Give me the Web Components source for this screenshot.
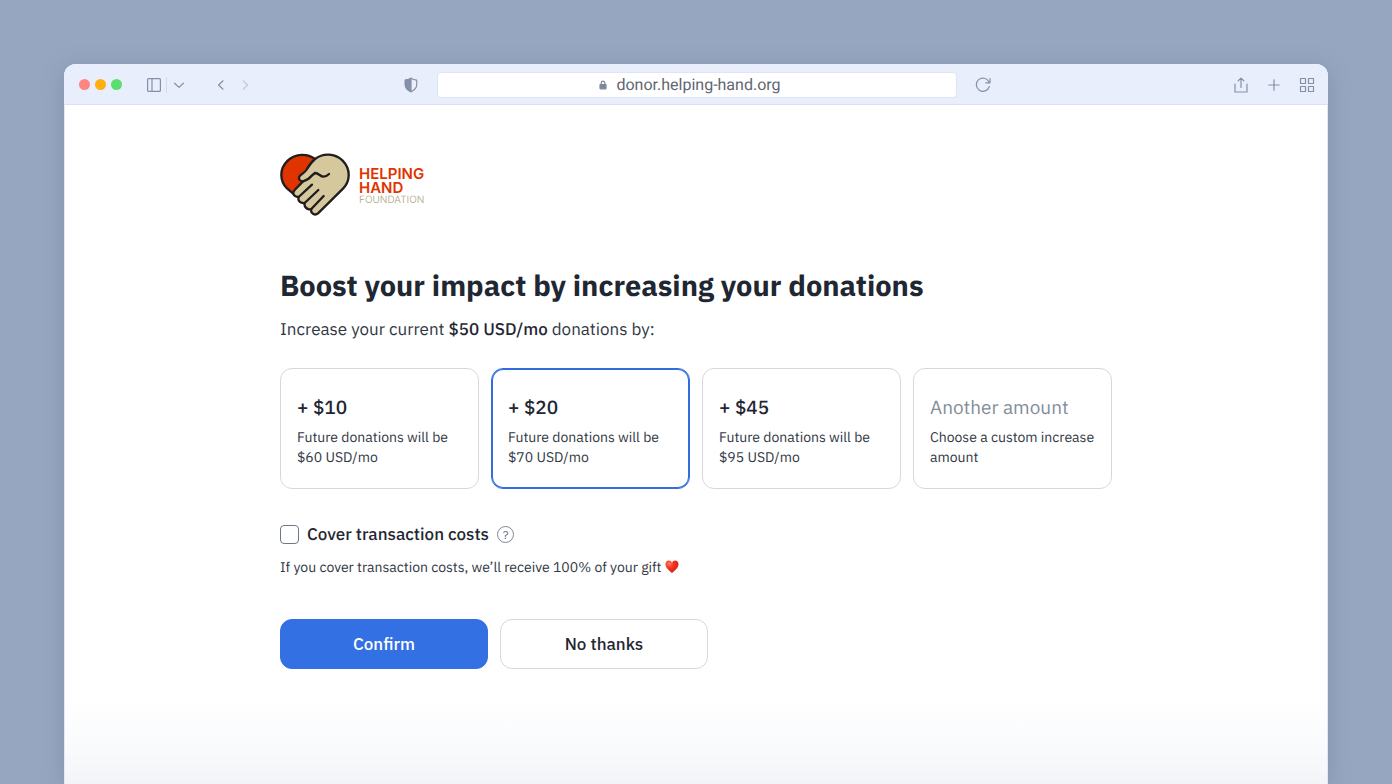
<!DOCTYPE html>
<html lang="en">
<head>
<meta charset="utf-8">
<meta name="viewport" content="width=device-width, initial-scale=1">
<title>Helping Hand Foundation</title>
<style>
  body {
    margin: 0;
    min-height: 100vh;
    background: #97a6c0;
    color: #1f2733;
    font-family: "IBM Plex Sans", Roboto, "Liberation Sans", sans-serif;
    text-rendering: geometricPrecision;
  }
  b { font-weight: 500; color: #1f2733; }
</style>
</head>
<body>
<browser-window>
  <browser-toolbar slot="toolbar" url="donor.helping-hand.org"></browser-toolbar>
  <brand-logo></brand-logo>
  <donation-form>
    <span slot="title">Boost your impact by increasing your donations</span>
    <span slot="intro">Increase your current <b>$50 USD/mo</b> donations by:</span>
    <amount-option slot="amounts" heading="+ $10">Future donations will be $60 USD/mo</amount-option>
    <amount-option slot="amounts" heading="+ $20" checked>Future donations will be $70 USD/mo</amount-option>
    <amount-option slot="amounts" heading="+ $45">Future donations will be $95 USD/mo</amount-option>
    <amount-option slot="amounts" heading="Another amount" muted>Choose a custom increase amount</amount-option>
    <cover-costs slot="extras" label="Cover transaction costs">If you cover transaction costs, we’ll receive 100% of your gift</cover-costs>
    <action-button slot="actions" primary>Confirm</action-button>
    <action-button slot="actions">No thanks</action-button>
  </donation-form>
</browser-window>

<script>
class BrowserWindow extends HTMLElement {
    constructor() {
        super();
        this.attachShadow({mode: "open"});
    }
    connectedCallback() {
        this.shadowRoot.innerHTML = `
          <style>
            :host {
              display: flex;
              box-sizing: border-box;
              min-height: 100vh;
              padding: 64px 64px 0;
            }
            .window {
              flex: 1;
              min-width: 0;
              border-radius: 12px 12px 0 0;
              overflow: hidden;
              background: linear-gradient(to top, #f3f4f7, #f9fafc 32px, #ffffff 88px);
              box-shadow: inset 1px 0 #e2e8f6, inset -1px 0 #e2e8f6, 0 4px 24px rgba(60, 80, 120, 0.24);
            }
            main {
              max-width: 832px;
              margin: 0 auto;
              padding: 48px 24px;
            }
          </style>
          <div class="window">
            <slot name="toolbar"></slot>
            <main><slot></slot></main>
          </div>
        `;
    }
}

class BrowserToolbar extends HTMLElement {
    constructor() {
        super();
        this.attachShadow({mode: "open"});
    }
    connectedCallback() {
        this.shadowRoot.innerHTML = `
          <style>
            :host {
              display: grid;
              box-sizing: border-box;
              grid-template-columns: 1fr minmax(0, 520px) 1fr;
              align-items: center;
              column-gap: 18px;
              height: 41px;
              padding: 1px 13px 0 14px;
              background: #e8eefc;
              border-bottom: 1px solid #d9e1f5;
            }
            .side {
              display: flex;
              align-items: center;
            }
            .dots {
              display: flex;
              gap: 5px;
              margin: 0 24px 0 1px;
            }
            .dots i {
              width: 11px;
              height: 11px;
              border-radius: 50%;
              background: #ff8482;
            }
            .dots i:nth-child(2) { background: #ffb00f; }
            .dots i:nth-child(3) { background: #5bdd70; }
            button {
              display: flex;
              padding: 0;
              border: 0;
              background: none;
              color: #8590a8;
            }
            svg {
              display: block;
              fill: none;
              stroke: currentColor;
              stroke-width: 1.2;
              stroke-linecap: round;
              stroke-linejoin: round;
            }
            .divider {
              width: 1px;
              height: 16px;
              margin: 0 4px;
              background: #d5dcec;
            }
            .history {
              display: flex;
              gap: 8px;
              margin-left: 26px;
            }
            .faded { color: #c3cbdc; }
            .push { margin-left: auto; }
            .tools {
              display: flex;
              gap: 17px;
            }
            .address {
              display: flex;
              align-items: center;
              justify-content: center;
              gap: 8px;
              height: 24px;
              padding-right: 14px;
              background: #ffffff;
              border: 1px solid #dde4f4;
              border-radius: 4px;
              color: #5f6572;
              font: 16px/24px Roboto, "Liberation Sans", sans-serif;
            }
            .address svg { color: #7d869c; }
          </style>
          <div class="side">
            <div class="dots"><i></i><i></i><i></i></div>
            <button aria-label="Sidebar">
              <svg width="16" height="16" viewBox="0 0 16 16"><rect x="1.6" y="1.6" width="12.8" height="12.8" rx="1"/><path d="M6 2v12"/></svg>
            </button>
            <span class="divider"></span>
            <button aria-label="Tab groups">
              <svg width="16" height="16" viewBox="0 0 16 16"><path d="M3.6 6.2 8 10.4l4.4-4.2"/></svg>
            </button>
            <div class="history">
              <button aria-label="Back"><svg width="16" height="16" viewBox="0 0 16 16"><path d="M10 3.8 5.6 8l4.4 4.2"/></svg></button>
              <button class="faded" aria-label="Forward"><svg width="16" height="16" viewBox="0 0 16 16"><path d="M6.2 3.8 10.6 8l-4.4 4.2"/></svg></button>
            </div>
            <button class="push" aria-label="Privacy report">
              <svg width="16" height="16" viewBox="0 0 16 16"><path d="M8 1.2c1.7 1.2 3.5 1.7 5.7 1.9v4.7c0 3.2-2.5 5.5-5.7 7-3.2-1.5-5.7-3.8-5.7-7V3.1C4.5 2.9 6.3 2.4 8 1.2Z"/><path d="M8 1.2v13.6c-3.2-1.5-5.7-3.8-5.7-7V3.1C4.5 2.9 6.3 2.4 8 1.2Z" fill="currentColor"/></svg>
            </button>
          </div>
          <div class="address">
            <svg width="10" height="10" viewBox="0 0 10 10"><rect x="2" y="4.6" width="6" height="4.2" rx=".5" fill="currentColor"/><path d="M3.2 4.5V3a1.8 1.8 0 0 1 3.6 0v1.5"/></svg>
            <span>${this.getAttribute("url")}</span>
          </div>
          <div class="side">
            <button aria-label="Reload">
              <svg width="16" height="16" viewBox="0 0 16 16"><path d="M14 5A6.6 6.6 0 1 0 14.3 9.500M15 1.5v4.3h-4.3"/></svg>
            </button>
            <div class="tools push">
              <button aria-label="Share"><svg width="16" height="16" viewBox="0 0 16 16"><path d="M8 10.5V1.2M5.2 3.8 8 1.1l2.8 2.7M2 7v8h12V7"/></svg></button>
              <button aria-label="New tab"><svg width="16" height="16" viewBox="0 0 16 16"><path d="M8 2.8v10.4M2.8 8h10.4"/></svg></button>
              <button aria-label="Tab overview"><svg width="16" height="16" viewBox="0 0 16 16"><path d="M1.5 1.5h5v5h-5zM9.5 1.5h5v5h-5zM1.5 9.5h5v5h-5zM9.5 9.5h5v5h-5z"/></svg></button>
            </div>
          </div>
        `;
    }
}

class BrandLogo extends HTMLElement {
    constructor() {
        super();
        this.attachShadow({mode: "open"});
    }
    connectedCallback() {
        this.shadowRoot.innerHTML = `
          <style>
            :host {
              display: flex;
              align-items: center;
              gap: 8px;
              font-family: Inter, Lato, sans-serif;
            }
            svg { display: block; }
            .name {
              width: 80px;
              padding-top: 2px;
              color: #e03400;
              font-size: 15px;
              font-weight: 600;
              line-height: 14px;
            }
            .name small {
              display: block;
              color: #aba07c;
              font-size: 10px;
              font-weight: 300;
              line-height: 10px;
            }
          </style>
          <svg width="71" height="64" viewBox="13 9 213 192" fill="none" stroke="#211d1c" stroke-width="7" stroke-linecap="round" stroke-linejoin="round">
            <path fill="#e03400" d="M118 27C96 10 60 9 36 32C10 57 12 93 34 115L56 134L120 60Z"/>
            <path fill="#d5c89d" d="M118 27C142 8 178 9 201 32C225 57 225 92 202 116L127 190C118 198 103 190 107 177C96 181 84 171 87 159C75 161 65 152 69 141C55 141 48 130 57 120L82 94C72 94 66 85 73 77C82 69 87 68 92 60C99 48 106 37 118 27Z"/>
            <path d="M82 94C94 91 101 86 107 78L118 69C128 68 133 80 144 80C151 80 156 76 160 72M109 104L69 141M128 120L87 159M144 138L107 177"/>
          </svg>
          <div class="name">HELPING<br>HAND<small>FOUNDATION</small></div>
        `;
    }
}

class DonationForm extends HTMLElement {
    constructor() {
        super();
        this.attachShadow({mode: "open"});
    }
    connectedCallback() {
        this.shadowRoot.innerHTML = `
          <style>
            :host {
              display: block;
              margin-top: 48px;
            }
            h1 {
              margin: 0;
              font-size: 29px;
              font-weight: 700;
              line-height: 40px;
            }
            p {
              margin: 12px 0 27px;
              font-size: 17px;
              line-height: 24px;
            }
            ::slotted([slot="intro"]) { color: #303743; }
            .amounts {
              display: grid;
              grid-template-columns: repeat(4, 1fr);
              gap: 12px;
            }
            .actions {
              display: flex;
              gap: 12px;
              margin-top: 42px;
            }
            @media only screen and (max-width: 860px) {
              .amounts { grid-template-columns: repeat(2, 1fr); }
            }
          </style>
          <h1><slot name="title"></slot></h1>
          <p><slot name="intro"></slot></p>
          <div class="amounts" role="radiogroup" aria-label="Donation increase"><slot name="amounts"></slot></div>
          <slot name="extras"></slot>
          <div class="actions"><slot name="actions"></slot></div>
        `;
        // radios sit in separate shadow roots, so the group is kept in sync here
        this.addEventListener("amount-change", (e) => {
            this.querySelectorAll("amount-option").forEach((option) => {
                if (option !== e.target) option.uncheck();
            });
        });
    }
}

class AmountOption extends HTMLElement {
    constructor() {
        super();
        this.attachShadow({mode: "open"});
    }
    connectedCallback() {
        this.shadowRoot.innerHTML = `
          <style>
            :host { display: grid; }
            label {
              position: relative;
              display: block;
              box-sizing: border-box;
              min-height: 121px;
              padding: 26px 16px 20px;
              border: 1px solid #d5d8df;
              border-radius: 12px;
              background: #ffffff;
              cursor: pointer;
            }
            label:has(input:checked) {
              border-color: #2f6de1;
              box-shadow: inset 0 0 0 1px #2f6de1;
            }
            input {
              position: absolute;
              opacity: 0;
              margin: 0;
            }
            .heading {
              display: block;
              margin-bottom: 6px;
              font-size: 19px;
              font-weight: 500;
              line-height: 26px;
            }
            :host([muted]) .heading {
              color: #848d9a;
              font-weight: 400;
            }
            .text {
              display: block;
              color: #303743;
              font-size: 14px;
              line-height: 20px;
            }
          </style>
          <label>
            <input type="radio" name="amount" ${this.hasAttribute("checked") ? "checked" : ""}>
            <span class="heading">${this.getAttribute("heading")}</span>
            <span class="text"><slot></slot></span>
          </label>
        `;
        this.input = this.shadowRoot.querySelector("input");
        this.input.addEventListener("change", () => {
            this.dispatchEvent(new CustomEvent("amount-change", {bubbles: true}));
        });
    }
    uncheck() {
        this.input.checked = false;
    }
}

class CoverCosts extends HTMLElement {
    constructor() {
        super();
        this.attachShadow({mode: "open"});
    }
    connectedCallback() {
        this.shadowRoot.innerHTML = `
          <style>
            :host {
              display: block;
              margin-top: 32px;
            }
            .row {
              display: flex;
              align-items: center;
              gap: 8px;
            }
            label {
              display: flex;
              align-items: center;
              gap: 8px;
              font-size: 17px;
              font-weight: 500;
              line-height: 26px;
            }
            input {
              appearance: none;
              box-sizing: border-box;
              width: 19px;
              height: 19px;
              margin: 0;
              border: 1px solid #6c7889;
              border-radius: 4px;
              background: #ffffff;
            }
            input:checked { background: #2f6de1; }
            button {
              display: flex;
              box-sizing: border-box;
              align-items: center;
              justify-content: center;
              width: 17px;
              height: 17px;
              padding: 0;
              border: 1px solid #7a8797;
              border-radius: 50%;
              background: none;
              color: #6c7889;
              font: 12px/15px "IBM Plex Sans", Roboto, sans-serif;
            }
            .note {
              display: flex;
              align-items: center;
              gap: 3px;
              margin-top: 10px;
              color: #303743;
              font-size: 14px;
              line-height: 20px;
            }
          </style>
          <div class="row">
            <label><input type="checkbox">${this.getAttribute("label")}</label>
            <button aria-label="About transaction costs">?</button>
          </div>
          <div class="note">
            <span><slot></slot></span>
            <svg width="14" height="14" viewBox="0 0 14 14" role="img" aria-label="heart">
              <defs><radialGradient id="shine" cx=".3" cy=".25" r=".8"><stop offset="0" stop-color="#ff7a62"/><stop offset=".45" stop-color="#f5321f"/><stop offset="1" stop-color="#d91d12"/></radialGradient></defs>
              <path fill="url(#shine)" d="M7 13C4.5 10.8.5 8 .5 4.2.5 2.1 1.9.6 3.7.6 5.2.6 6.4 1.5 7 2.8 7.6 1.5 8.8.6 10.3.6c1.8 0 3.2 1.5 3.2 3.6C13.5 8 9.5 10.8 7 13Z"/>
            </svg>
          </div>
        `;
    }
}

class ActionButton extends HTMLElement {
    constructor() {
        super();
        this.attachShadow({mode: "open"});
    }
    connectedCallback() {
        this.shadowRoot.innerHTML = `
          <style>
            :host {
              display: block;
              flex: 0 1 208px;
            }
            button {
              width: 100%;
              height: 50px;
              border: 1px solid #d5d8df;
              border-radius: 12px;
              background: #ffffff;
              color: inherit;
              font-family: inherit;
              font-size: 17px;
              font-weight: 500;
              cursor: pointer;
            }
            :host([primary]) button {
              border-color: #3370e4;
              background: #3370e4;
              color: #ffffff;
            }
          </style>
          <button type="button"><slot></slot></button>
        `;
    }
}

customElements.define("browser-window", BrowserWindow);
customElements.define("browser-toolbar", BrowserToolbar);
customElements.define("brand-logo", BrandLogo);
customElements.define("donation-form", DonationForm);
customElements.define("amount-option", AmountOption);
customElements.define("cover-costs", CoverCosts);
customElements.define("action-button", ActionButton);
</script>
</body>
</html>
